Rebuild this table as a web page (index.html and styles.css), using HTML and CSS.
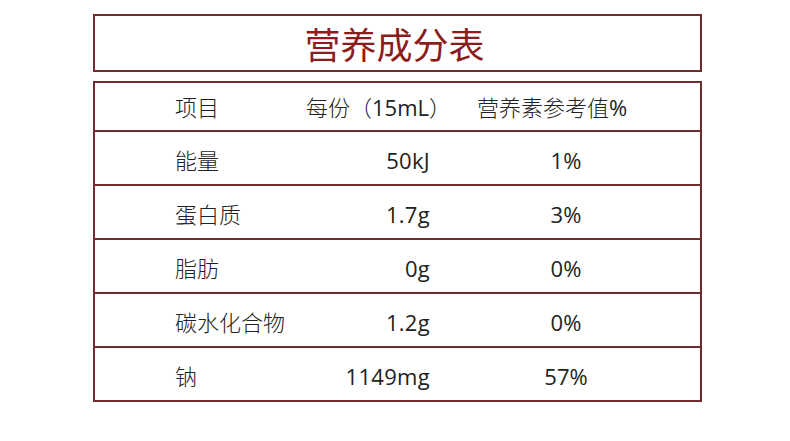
FILE: index.html
```html
<!DOCTYPE html>
<html lang="zh">
<head>
<meta charset="utf-8">
<link rel="stylesheet" href="styles.css">
</head>
<body>
<div class="page">
  <div class="title-box"><h1 class="title">营养成分表</h1></div>
  <div class="table">
    <div class="row head">
      <div class="c1">项目</div>
      <div class="c2 h2">每份（<span class="num">15mL</span>）</div>
      <div class="c3 h3">营养素参考值<span class="num">%</span></div>
    </div>
    <div class="row">
      <div class="c1">能量</div>
      <div class="c2">50kJ</div>
      <div class="c3">1%</div>
    </div>
    <div class="row">
      <div class="c1">蛋白质</div>
      <div class="c2">1.7g</div>
      <div class="c3">3%</div>
    </div>
    <div class="row">
      <div class="c1">脂肪</div>
      <div class="c2">0g</div>
      <div class="c3">0%</div>
    </div>
    <div class="row">
      <div class="c1">碳水化合物</div>
      <div class="c2">1.2g</div>
      <div class="c3">0%</div>
    </div>
    <div class="row">
      <div class="c1">钠</div>
      <div class="c2">1149mg</div>
      <div class="c3">57%</div>
    </div>
  </div>
</div>
</body>
</html>
```
FILE: styles.css
```css
html, body {
  margin: 0;
  padding: 0;
  background: #ffffff;
}
.page {
  padding: 14px 0 0 93px;
  width: 609px;
  font-family: "Open Sans", "Noto Sans CJK SC", "Noto Sans", sans-serif;
  color: #222222;
}
.title-box {
  height: 54px;
  border: 2px solid #6e2b2b;
  display: flex;
  align-items: center;
  justify-content: center;
}
.title {
  margin: 0;
  font-family: "Noto Sans CJK SC", sans-serif;
  font-size: 36px;
  font-weight: 400;
  color: #8c1d1d;
  line-height: 1;
  transform: translateX(-3px);
}
.table {
  margin-top: 9px;
  border: 2px solid #6e2b2b;
}
.row {
  display: grid;
  grid-template-columns: 190px 145px 1fr;
  height: 52px;
  align-items: center;
  border-top: 2px solid #6e2b2b;
  font-size: 22px;
  font-weight: 400;
  line-height: 1;
  white-space: nowrap;
}
.row.head {
  height: 47px;
  border-top: none;
  font-weight: 300;
}
.num {
  font-weight: 400;
}
.c1 {
  padding-left: 80px;
  padding-top: 3px;
  font-weight: 300;
}
.c2 {
  text-align: right;
  padding-top: 3px;
  letter-spacing: 0.3px;
}
.c3 {
  text-align: center;
  padding-top: 3px;
  padding-left: 2px;
}
.row.head > div {
  padding-top: 1px;
}
.c2.h2 {
  text-align: left;
  padding-left: 21px;
  letter-spacing: 0;
}
.c3.h3 {
  text-align: left;
  padding-left: 47px;
}
```
